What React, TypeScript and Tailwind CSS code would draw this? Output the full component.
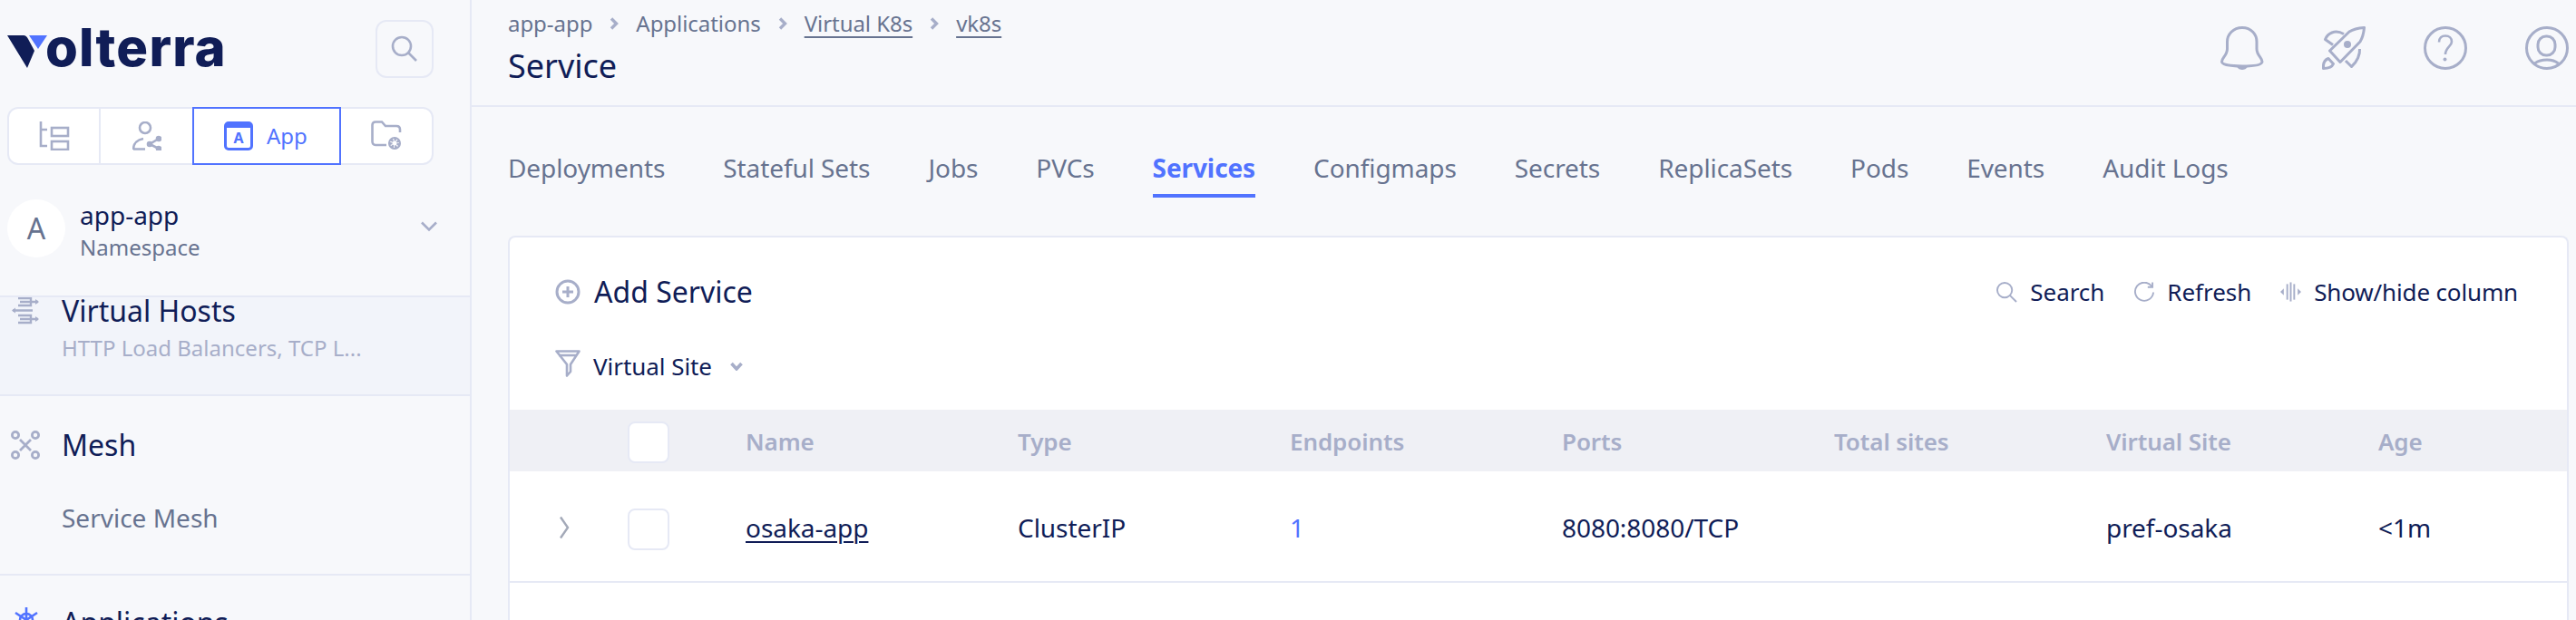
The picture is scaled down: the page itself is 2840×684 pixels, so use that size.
import React from "react";

const C = "#a7aec9";

function Crumb({ children, link }: { children: React.ReactNode; link?: boolean }) {
  return (
    <span className={link ? "underline decoration-2 underline-offset-[5px]" : ""}>{children}</span>
  );
}

function CrumbSep() {
  return (
    <svg width="10" height="14" viewBox="0 0 10 14" className="mx-[19px] shrink-0">
      <path d="M2 1.5 L7.5 7 L2 12.5" fill="none" stroke="#a7aec9" strokeWidth="3.4" />
    </svg>
  );
}

function Logo() {
  return (
    <div className="flex items-end h-[44px] w-[260px]">
      <svg width="46" height="40" viewBox="0 0 46 40" className="shrink-0 mb-[-1px] ml-[8px]">
        <path d="M0 2 H18 Q21 2 23 6 L30 19 L22 38 Z" fill="#101d57" />
        <path d="M24 2 H44 L34 17 Z" fill="#5173ff" />
      </svg>
      <span className="font-['Inter',sans-serif] font-extrabold text-[58px] leading-[44px] tracking-[1.2px] text-[#101d57] ml-[-4px] h-[44px] translate-y-[-2px]">
        olterra
      </span>
    </div>
  );
}

const tabs = ["Deployments", "Stateful Sets", "Jobs", "PVCs", "Services", "Configmaps", "Secrets", "ReplicaSets", "Pods", "Events", "Audit Logs"];
const cols = ["Name", "Type", "Endpoints", "Ports", "Total sites", "Virtual Site", "Age"];

export default function App() {
  return (
    <div className="flex w-[2840px] h-[684px] overflow-hidden bg-[#f7f8fb] font-['Noto_Sans',sans-serif] text-[#101d57]">
      {/* Sidebar */}
      <aside className="w-[520px] shrink-0 border-r-2 border-[#e6e9f5] flex flex-col overflow-hidden">
        <div className="flex items-center justify-between h-[64px] mt-[22px] pr-[40px] shrink-0">
          <Logo />
          <button className="w-[64px] h-[64px] rounded-[12px] border-2 border-[#e6e9f5] flex items-center justify-center">
            <svg width="30" height="30" viewBox="0 0 30 30" fill="none" stroke={C} strokeWidth="2.6">
              <circle cx="12" cy="12" r="10" />
              <path d="M19 19 L28 28" />
            </svg>
          </button>
        </div>
        <div className="flex h-[64px] mt-[32px] mx-[8px] w-[470px] shrink-0 rounded-[12px] border-2 border-[#e6e9f5] bg-white">
          <div className="w-[101px] h-full border-r-2 border-[#e6e9f5] flex items-center justify-center">
            <svg width="34" height="32" viewBox="0 0 34 32" fill="none" stroke={C} strokeWidth="2.6">
              <path d="M2 0 V27 H9 M2 9 H9" />
              <rect x="14" y="7" width="18" height="9" />
              <rect x="14" y="22" width="18" height="9" />
            </svg>
          </div>
          <div className="w-[101px] h-full flex items-center justify-center">
            <svg width="32" height="32" viewBox="0 0 32 32" fill="none" stroke={C} strokeWidth="2.6">
              <circle cx="14" cy="7" r="6" />
              <path d="M1 31 C1 24 6 20 12 19 M1 30.5 H14" />
              <circle cx="29" cy="19" r="2" fill={C} />
              <circle cx="19" cy="25" r="2" fill={C} />
              <circle cx="29" cy="30" r="2" fill={C} />
              <path d="M29 19 L19 25 L29 30" />
            </svg>
          </div>
          <div className="w-[164px] h-[64px] mt-[-2px] shrink-0 border-2 border-[#5173ff] bg-white flex items-center pl-[33px] gap-[15px] text-[#5173ff]">
            <div className="w-[32px] h-[32px] rounded-[5px] border-[3px] border-[#5173ff] border-t-[7px] flex items-center justify-center text-[16px] font-bold leading-none">
              A
            </div>
            <span className="text-[24px] leading-[32px]">App</span>
          </div>
          <div className="flex-1 h-full flex items-center justify-center">
            <svg width="34" height="34" viewBox="0 0 34 34" fill="none" stroke={C} strokeWidth="2.6">
              <path d="M17 27 H5 Q1.5 27 1.5 23 V5 Q1.5 1.5 5 1.5 H12 L16 6 H28 Q32 6 32 10 V13" />
              <circle cx="26" cy="25" r="4.5" strokeWidth="4" strokeDasharray="2.8 1.2" />
              <circle cx="26" cy="25" r="6" strokeWidth="2" />
            </svg>
          </div>
        </div>
        <div className="flex items-center h-[64px] mt-[38px] ml-[8px] shrink-0">
          <div className="w-[64px] h-[64px] rounded-full bg-white flex items-center justify-center text-[32px] text-[#677390]">
            A
          </div>
          <div className="ml-[16px] flex flex-col flex-1 mt-[5px]">
            <span className="text-[28px] leading-[36px]">app-app</span>
            <span className="text-[24px] leading-[36px] text-[#677390]">Namespace</span>
          </div>
          <svg width="20" height="12" viewBox="0 0 20 12" fill="none" stroke={C} strokeWidth="2.6" className="mr-[35px] mb-[5px]">
            <path d="M2 1.5 L10 9.5 L18 1.5" />
          </svg>
        </div>
        <div className="mt-[42px] h-[111px] shrink-0 border-y-2 border-[#e6e9f5] bg-[#f2f4fa]">
          <div className="flex h-[30px] items-center">
            <svg width="32" height="30" viewBox="0 0 32 30" fill="none" stroke={C} strokeWidth="2.4" className="ml-[12px] shrink-0">
              <path d="M8 1 H22 V9 H8 M8 20 H22 V28 H8" />
              <path d="M10 5 H30 M2 14.5 H24 M10 24 H30" />
              <path d="M27 2 L31 5 L27 8 Z M5 11.5 L1 14.5 L5 17.5 Z M27 21 L31 24 L27 27 Z" fill={C} stroke="none" />
            </svg>
            <span className="ml-[24px] text-[32px] leading-[30px]">Virtual Hosts</span>
          </div>
          <div className="ml-[68px] mt-[10px] text-[24px] leading-[32px] text-[#a7aec9]">HTTP Load Balancers, TCP L...</div>
        </div>
        <div className="h-[198px] shrink-0 border-b-2 border-[#e6e9f5]">
          <div className="flex items-center h-[40px] mt-[34px]">
            <svg width="32" height="32" viewBox="0 0 32 32" fill="none" stroke={C} strokeWidth="2.8" className="ml-[12px] shrink-0">
              <circle cx="5" cy="5" r="3.6" />
              <circle cx="27" cy="5" r="3.6" />
              <circle cx="5" cy="27" r="3.6" />
              <circle cx="27" cy="27" r="3.6" />
              <path d="M10 10 L22 22 M22 10 L10 22" />
            </svg>
            <span className="ml-[24px] text-[32px] leading-[40px]">Mesh</span>
          </div>
          <div className="ml-[68px] mt-[40px] text-[28px] leading-[40px] text-[#677390]">Service Mesh</div>
        </div>
        <div className="flex items-start h-[60px] mt-[35px] shrink-0">
          <svg width="26" height="26" viewBox="0 0 26 26" fill="none" stroke="#5173ff" strokeWidth="2.6" className="ml-[16px] shrink-0">
            <circle cx="13" cy="14" r="7" />
            <path d="M13 0 V26 M1 6 L25 22 M25 6 L1 22" />
          </svg>
          <span className="ml-[26px] text-[32px] leading-[32px] mt-[1px]">Applications</span>
        </div>
      </aside>

      {/* Main */}
      <main className="flex-1 min-w-0 flex flex-col">
        <header className="h-[118px] shrink-0 border-b-2 border-[#e6e9f5] flex justify-between pl-[40px] pr-[8px]">
          <div className="flex flex-col">
            <div className="flex items-center h-[32px] mt-[10px] text-[24px] leading-[32px] text-[#677390] tracking-[-0.05px]">
              <Crumb>app-app</Crumb>
              <CrumbSep />
              <Crumb>Applications</Crumb>
              <CrumbSep />
              <Crumb link>Virtual K8s</Crumb>
              <CrumbSep />
              <Crumb link>vk8s</Crumb>
            </div>
            <div className="text-[36px] leading-[48px] mt-[7px]">Service</div>
          </div>
          <div className="flex gap-[64px] mt-[29px] h-[48px]">
            <svg width="48" height="48" viewBox="0 0 48 48" fill="none" stroke={C} strokeWidth="3">
              <path d="M24 1.5 C14 1.5 7.5 9 7.5 17 V25 C7.5 32 1.5 35 1.5 39 C1.5 42.5 11 44 24 44 C37 44 46 42.5 46 39 C46 35 40 32 40 25 V17 C40 9 34 1.5 24 1.5 Z" />
              <path d="M18 44 H30 C29 47 26 48 24 48 C22 48 19 47 18 44 Z" fill={C} stroke="none" />
            </svg>
            <svg width="48" height="48" viewBox="0 0 48 48" fill="none" stroke={C} strokeWidth="3" strokeLinejoin="round">
              <path d="M46.5 1.5 C40 2 34 3.5 30 6 L8.5 27 L20 39.5 L42 17 C45 12 46 7 46.5 1.5 Z" />
              <path d="M12 20.5 L3.5 14.5 C6 8 14 3 24 8.5" />
              <path d="M41.5 25 C42 31 39 39 32.5 44.5 L26 38" />
              <circle cx="28" cy="20" r="4" fill={C} stroke="none" />
              <path d="M1.5 46.5 C1 41 3 37 7 35.5 L12.5 41.5 C11 45 7 46.5 1.5 46.5 Z" />
            </svg>
            <svg width="48" height="48" viewBox="0 0 48 48" fill="none" stroke={C} strokeWidth="3">
              <circle cx="24" cy="24" r="22.5" />
              <path d="M17 17.5 C17 13 20 10.5 24 10.5 C28 10.5 31 13 31 17 C31 22 24 23.5 24 31" strokeWidth="2.6" />
              <circle cx="23.5" cy="36.5" r="2" fill={C} stroke="none" />
            </svg>
            <svg width="48" height="48" viewBox="0 0 48 48" fill="none" stroke={C} strokeWidth="3">
              <circle cx="24" cy="24" r="22.5" />
              <rect x="14" y="11" width="19" height="21" rx="9" />
              <path d="M10.5 41 C14 38 19 37 24 37 C29 37 33 38 36.5 41" />
            </svg>
          </div>
        </header>

        <nav className="flex gap-[64px] pl-[40px] pt-[48px] h-[142px] shrink-0 text-[28px] text-[#677390] tracking-[-0.08px]">
          {tabs.map((t) =>
            t === "Services" ? (
              <div key={t} className="h-[52px] border-b-4 border-[#5173ff] leading-[38px] font-bold text-[#5173ff] tracking-[-0.1px]">
                {t}
              </div>
            ) : (
              <div key={t} className="h-[52px] leading-[38px]">
                {t}
              </div>
            )
          )}
        </nav>

        <section className="ml-[40px] mr-[8px] flex-1 rounded-t-[8px] border-x-2 border-t-2 border-[#e6e9f5] bg-white">
          <div className="flex items-center justify-between h-[120px] pl-[50px] pr-[54px]">
            <div className="flex items-center gap-[15px] text-[32px]">
              <svg width="28" height="28" viewBox="0 0 28 28" fill="none" stroke={C} strokeWidth="3">
                <circle cx="14" cy="14" r="12" />
                <path d="M14 8 V20 M8 14 H20" />
              </svg>
              <span className="leading-[40px]">Add Service</span>
            </div>
            <div className="flex items-center text-[26px] leading-[36px] tracking-[-0.05px]">
              <svg width="23" height="23" viewBox="0 0 24 24" fill="none" stroke={C} strokeWidth="2" className="mr-[14px]">
                <circle cx="9.5" cy="9.5" r="8.5" />
                <path d="M15.5 15.5 L23 23" />
              </svg>
              <span>Search</span>
              <svg width="23" height="23" viewBox="0 0 24 24" fill="none" stroke={C} strokeWidth="2" className="ml-[32px] mr-[14px]">
                <path d="M21 5 A10.5 10.5 0 1 0 23 12" />
                <path d="M22 0.5 V6 H16.5" />
              </svg>
              <span>Refresh</span>
              <svg width="23" height="22" viewBox="0 0 24 22" className="ml-[32px] mr-[14px]" fill={C}>
                <path d="M0 11 L4 7 V15 Z M24 11 L20 7 V15 Z" />
                <rect x="7" y="2" width="2" height="18" />
                <rect x="11" y="0" width="2" height="22" />
                <rect x="15" y="2" width="2" height="18" />
              </svg>
              <span className="tracking-[-0.15px]">Show/hide column</span>
            </div>
          </div>
          <div className="flex items-center h-[44px] mb-[26px] pl-[50px] text-[26px] tracking-[-0.05px]">
            <svg width="28" height="30" viewBox="0 0 28 30" fill="none" stroke={C} strokeWidth="2.6" className="mt-[-6px]">
              <path d="M1.5 1.5 H26.5 L17 16 V24 L13 28.5 V16 Z" strokeLinejoin="round" />
              <path d="M4 6 H24" />
            </svg>
            <span className="ml-[14px] leading-[36px]">Virtual Site</span>
            <svg width="14" height="10" viewBox="0 0 14 10" className="ml-[20px]" fill="none" stroke={C} strokeWidth="3.6">
              <path d="M1.5 2 L7 8 L12.5 2" />
            </svg>
          </div>
          <div className="grid grid-cols-[259px_repeat(7,300px)] h-[68px] items-center bg-[#eff0f5] text-[26px] font-semibold text-[#a7aec9] pl-[1px] pt-[3px] tracking-[-0.1px]">
            <div className="pl-[129px]">
              <div className="w-[46px] h-[46px] rounded-[8px] border-2 border-[#e6e9f5] bg-white" />
            </div>
            {cols.map((c) => (
              <div key={c}>{c}</div>
            ))}
          </div>
          <div className="grid grid-cols-[259px_repeat(7,300px)] h-[123px] items-center border-b-2 border-[#e6e9f5] text-[28px] pl-[1px] pt-[3px] tracking-[-0.05px]">
            <div className="flex items-center pl-[53px]">
              <svg width="12" height="26" viewBox="0 0 12 26" fill="none" stroke="#a3a9b8" strokeWidth="2.4" className="mr-[64px]">
                <path d="M2 1.5 L10 13 L2 24.5" />
              </svg>
              <div className="w-[46px] h-[46px] rounded-[8px] border-2 border-[#e6e9f5] bg-white mt-[4px]" />
            </div>
            <div className="underline decoration-2 underline-offset-[4px]">osaka-app</div>
            <div>ClusterIP</div>
            <div className="text-[#5173ff]">1</div>
            <div>8080:8080/TCP</div>
            <div />
            <div>pref-osaka</div>
            <div>&lt;1m</div>
          </div>
        </section>
      </main>
    </div>
  );
}
